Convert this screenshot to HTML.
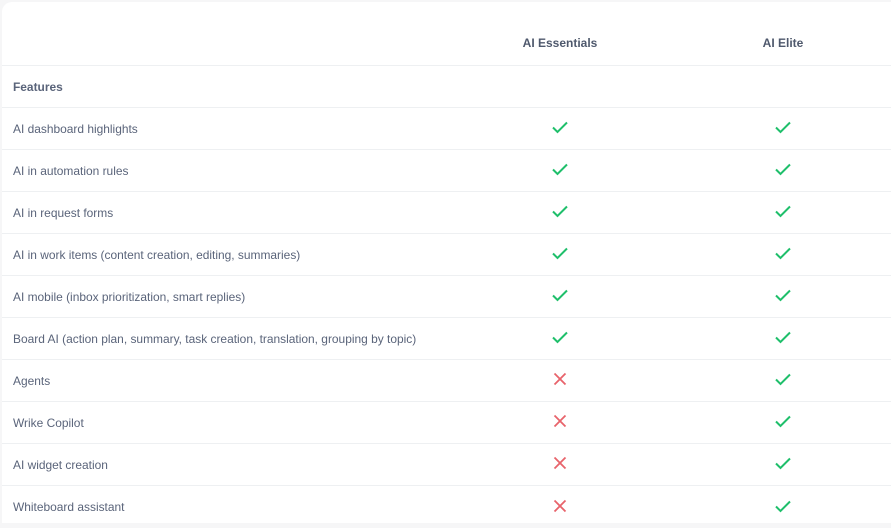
<!DOCTYPE html>
<html><head><style>
html,body{margin:0;background:#f6f6f7;width:891px;height:523px;overflow:hidden;font-family:"Liberation Sans",sans-serif;}
.card{position:absolute;left:2px;top:2px;width:889px;height:521px;background:#fff;border-radius:10px 0 0 0;}
.row{position:absolute;left:2px;width:889px;height:42px;border-top:1px solid #eef0f2;box-sizing:border-box;}
.row span{position:absolute;left:11px;top:1px;line-height:41px;font-size:11.95px;color:#5a647a;}
.h{position:absolute;top:36px;font-size:12px;color:#4f596d;font-weight:bold;transform:translateX(-50%);}
svg{position:absolute;}
</style></head><body>
<div class="card"></div>
<div class="h" style="left:560px">AI Essentials</div>
<div class="h" style="left:783px">AI Elite</div>
<div class="row" style="top:65px"><span style="font-weight:bold;color:#5a647a">Features</span></div>
<div id="rows"></div>
<script>
const items=[["AI dashboard highlights",1],["AI in automation rules",1],["AI in request forms",1],["AI in work items (content creation, editing, summaries)",1],["AI mobile (inbox prioritization, smart replies)",1],["Board AI (action plan, summary, task creation, translation, grouping by topic)",1],["Agents",0],["Wrike Copilot",0],["AI widget creation",0],["Whiteboard assistant",0]];
const chk=(x,y)=>`<svg style="left:${x-9}px;top:${y-7}px" width="18" height="14"><path d="M2 7.5 L6.5 12 L16 2.5" fill="none" stroke="#1fbf6b" stroke-width="2"/></svg>`;
const xx=(x,y)=>`<svg style="left:${x-7}px;top:${y-7}px" width="14" height="14"><path d="M1.5 1.5 L12.5 12.5 M12.5 1.5 L1.5 12.5" fill="none" stroke="#e8636b" stroke-width="1.8"/></svg>`;
let h="";
items.forEach((it,i)=>{const top=107+i*42;const cy=top+21-1+(i==9?1:0);
h+=`<div class="row" style="top:${top}px;${i==9?'height:38px':''}"><span>${it[0]}</span></div>`;
h+=(it[1]?chk(560,cy):xx(560,cy))+chk(783,cy);});
document.getElementById("rows").innerHTML=h;
</script>
</body></html>
